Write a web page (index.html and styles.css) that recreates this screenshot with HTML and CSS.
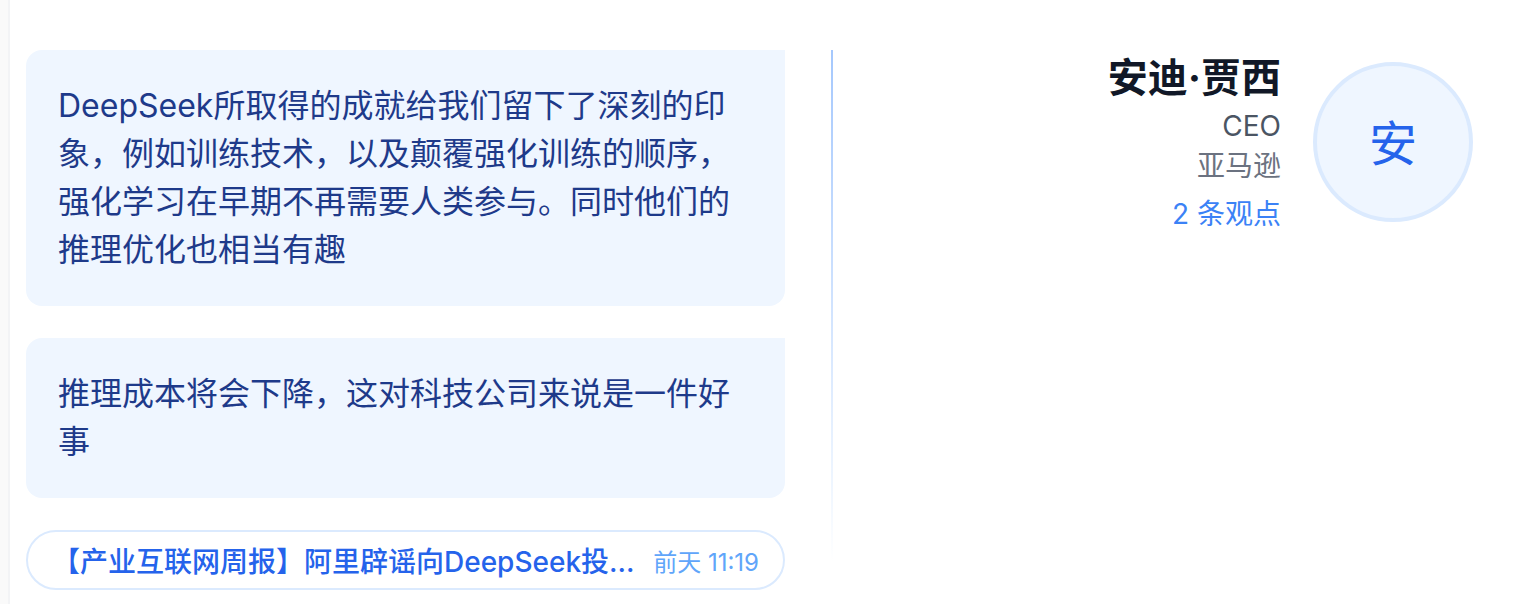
FILE: index.html
```html
<!DOCTYPE html>
<html lang="zh-CN">

<head>
    <meta charset="UTF-8">
    <meta name="viewport" content="width=device-width, initial-scale=1.0">
    <title>观点</title>
    <link rel="stylesheet" href="styles.css">
</head>

<body>
    <div class="panel">
        <div class="quotes">
            <div class="quote">DeepSeek所取得的成就给我们留下了深刻的印象，例如训练技术，以及颠覆强化训练的顺序，强化学习在早期不再需要人类参与。同时他们的推理优化也相当有趣</div>
            <div class="quote">推理成本将会下降，这对科技公司来说是一件好事</div>
            <a class="source" href="#">
                <span class="source-title">【产业互联网周报】阿里辟谣向DeepSeek投资740亿元的传闻</span>
                <span class="source-time">前天 11:19</span>
            </a>
        </div>
        <div class="divider"></div>
        <div class="person">
            <div class="person-info">
                <div class="person-name">安迪·贾西</div>
                <div class="person-title">CEO</div>
                <div class="person-company">亚马逊</div>
                <div class="person-count">2 条观点</div>
            </div>
            <div class="avatar">安</div>
        </div>
    </div>
</body>

</html>
```

FILE: styles.css
```css
html,
body {
    height: 100%;
}

body {
    margin: 0;
    padding-left: 8px;
    background-color: #fafafa;
    font-family: Inter, "Noto Sans CJK SC", sans-serif;
    overflow: hidden;
}

.panel {
    box-sizing: border-box;
    height: 604px;
    display: flex;
    padding: 50px 65px 0 16px;
    background: white;
    border-left: 2px solid #f3f4f6;
}

.quotes {
    width: 759px;
    flex-shrink: 0;
}

.quote {
    padding: 32px;
    margin-bottom: 32px;
    background-color: #eff6ff;
    border-radius: 16px 0 16px 16px;
    color: #1e3a8a;
    font-size: 32px;
    line-height: 48px;
}

.source {
    box-sizing: border-box;
    height: 60px;
    display: flex;
    align-items: center;
    gap: 16px;
    padding: 0 24px;
    border: 2px solid #dbeafe;
    border-radius: 30px;
    text-decoration: none;
}

.source-title {
    flex: 1;
    min-width: 0;
    overflow: hidden;
    white-space: nowrap;
    text-overflow: ellipsis;
    color: #2563eb;
    font-size: 28px;
    font-weight: 500;
}

.source-time {
    flex-shrink: 0;
    color: #60a5fa;
    font-size: 24px;
}

.divider {
    width: 2px;
    height: 512px;
    margin-left: 46px;
    background: linear-gradient(to bottom, #a5c8fd, #eff6ff 85%, white);
}

.person {
    flex: 1;
    display: flex;
    justify-content: flex-end;
    align-items: flex-start;
    gap: 32px;
    padding-top: 12px;
}

.person-info {
    text-align: right;
}

.person-name {
    color: #111827;
    font-size: 40px;
    font-weight: 700;
    line-height: 32px;
    margin-bottom: 12px;
}

.person-title {
    color: #4b5563;
    font-size: 28px;
    line-height: 40px;
}

.person-company {
    color: #6b7280;
    font-size: 28px;
    line-height: 40px;
}

.person-count {
    margin-top: 8px;
    color: #3b82f6;
    font-size: 28px;
    line-height: 40px;
}

.avatar {
    box-sizing: border-box;
    width: 160px;
    height: 160px;
    display: flex;
    align-items: center;
    justify-content: center;
    padding-bottom: 4px;
    background-color: #eff6ff;
    border: 4px solid #dbeafe;
    border-radius: 50%;
    color: #2563eb;
    font-size: 48px;
}
```
